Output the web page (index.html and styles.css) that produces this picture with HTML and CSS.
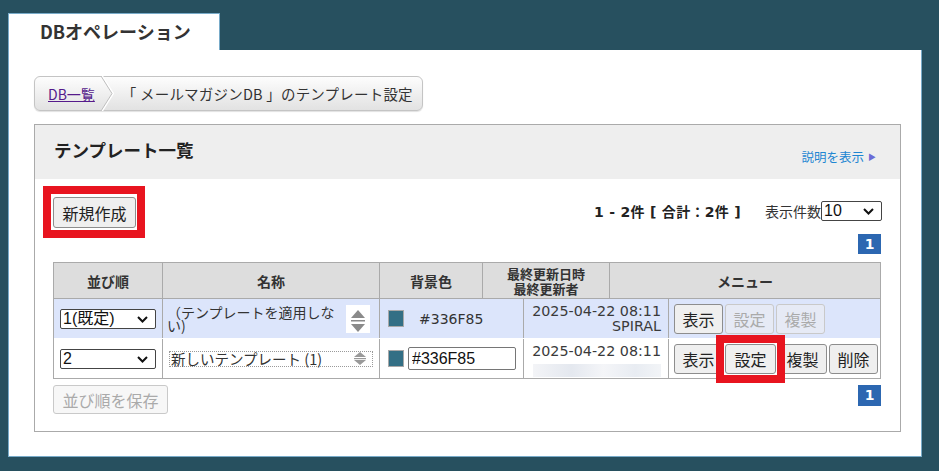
FILE: index.html
```html
<!DOCTYPE html>
<html lang="ja">
<head>
  <meta charset="UTF-8" />
  <title>DBオペレーション</title>
  <link rel="stylesheet" href="styles.css">
</head>
<body>

<div class="tab">DBオペレーション</div>

<div class="panel">
  <div class="crumbs">
    <a href="#" class="crumb-link">DB一覧</a>
    <svg class="crumb-sep" width="14" height="35" viewBox="0 0 14 35">
      <polyline points="1,0 12,17.5 1,35" fill="none" stroke="#fff" stroke-width="2"/>
      <polyline points="0,0 11,17.5 0,35" fill="none" stroke="#bdbdbd" stroke-width="1"/>
    </svg>
    <span class="crumb-text">「 メールマガジンDB 」のテンプレート設定</span>
  </div>

  <div class="list">
    <div class="list-head">
      <h2>テンプレート一覧</h2>
      <a href="#" class="help">説明を表示<span class="help-arrow">&#9654;</span></a>
    </div>

    <div class="list-body">
      <div class="toolbar">
        <span class="marked">
          <button class="btn btn-new">新規作成</button>
          <span class="mark"></span>
        </span>
        <div class="counts">
          <b class="total">1 - 2件 [ 合計：2件 ]</b>
          <span class="per-page">表示件数</span>
          <span class="sel">
            <select class="per-select"><option>10</option></select>
            <svg width="11" height="7" viewBox="0 0 11 7"><polyline points="1,1 5.5,5.5 10,1" fill="none" stroke="#111" stroke-width="2"/></svg>
          </span>
        </div>
      </div>

      <div class="pager"><span class="page">1</span></div>

      <div class="grid">
        <div class="grid-head">
          <div>並び順</div>
          <div>名称</div>
          <div>背景色</div>
          <div class="two-line"><span>最終更新日時</span><span>最終更新者</span></div>
          <div>メニュー</div>
        </div>

        <div class="grid-row default">
          <div class="c-order">
            <span class="sel">
              <select class="order"><option>1(既定)</option></select>
              <svg width="11" height="7" viewBox="0 0 11 7"><polyline points="1,1 5.5,5.5 10,1" fill="none" stroke="#111" stroke-width="2"/></svg>
            </span>
          </div>
          <div class="c-name">
            <div class="name-text">（テンプレートを適用しない)</div>
            <svg class="spin" width="24" height="28" viewBox="0 0 24 28">
              <rect width="24" height="28" fill="#fff"/>
              <polygon points="12,5 19,13 5,13" fill="#8a8a8a"/>
              <rect x="5" y="15" width="14" height="1.5" fill="#8a8a8a"/>
              <polygon points="5,19 19,19 12,27" fill="#8a8a8a"/>
            </svg>
          </div>
          <div class="c-color">
            <span class="swatch"></span>
            <span class="hex">#336F85</span>
          </div>
          <div class="c-date">2025-04-22 08:11<br>SPIRAL</div>
          <div class="c-menu">
            <button class="btn btn-sm">表示</button>
            <button class="btn btn-sm" disabled>設定</button>
            <button class="btn btn-sm" disabled>複製</button>
          </div>
        </div>

        <div class="grid-row">
          <div class="c-order">
            <span class="sel">
              <select class="order"><option>2</option></select>
              <svg width="11" height="7" viewBox="0 0 11 7"><polyline points="1,1 5.5,5.5 10,1" fill="none" stroke="#111" stroke-width="2"/></svg>
            </span>
          </div>
          <div class="c-name">
            <div class="name-box">
              <span>新しいテンプレート (1)</span>
              <svg width="12" height="13" viewBox="0 0 12 13">
                <polygon points="6,0 12,5 0,5" fill="#999"/>
                <rect x="0" y="6" width="12" height="1.2" fill="#999"/>
                <polygon points="0,8 12,8 6,13" fill="#999"/>
              </svg>
            </div>
          </div>
          <div class="c-color">
            <span class="swatch"></span>
            <input class="hex-input" type="text" value="#336F85">
          </div>
          <div class="c-date">2025-04-22 08:11<span class="blur"></span></div>
          <div class="c-menu">
            <button class="btn btn-sm">表示</button>
            <span class="marked">
              <button class="btn btn-sm">設定</button>
              <span class="mark mark-sm"></span>
            </span>
            <button class="btn btn-sm">複製</button>
            <button class="btn btn-sm">削除</button>
          </div>
        </div>
      </div>

      <div class="list-foot">
        <button class="btn btn-save" disabled>並び順を保存</button>
        <span class="page">1</span>
      </div>
    </div>
  </div>
</div>

</body>
</html>
```

FILE: styles.css
```css
body {
  margin: 0;
  padding: 13px 17px 0 8px;
  background: #27505f;
  font-family: "DejaVu Sans", "Noto Sans CJK JP", sans-serif;
  color: #222;
}
.tab {
  width: 212px;
  height: 37px;
  box-sizing: border-box;
  background: #fff;
  border: 1px solid #78abc9;
  border-bottom: none;
  padding-left: 31px;
  font-family: "Noto Sans CJK JP", sans-serif;
  font-weight: bold;
  font-size: 18px;
  line-height: 35px;
  color: #333;
}
.panel {
  height: 407px;
  box-sizing: border-box;
  background: #fff;
  border: 1px solid #78abc9;
  border-top: none;
  padding: 26px 20px 0 25px;
}

/* breadcrumb */
.crumbs {
  display: flex;
  align-items: center;
  width: 389px;
  height: 35px;
  box-sizing: border-box;
  border: 1px solid #c4c4c4;
  border-radius: 6px;
  background: linear-gradient(#fdfdfd, #e2e2e2);
  box-shadow: 0 1px 1px rgba(0,0,0,0.12);
  font-family: "Noto Sans CJK JP", sans-serif;
  font-size: 14px;
}
.crumb-link {
  margin-left: 13px;
  color: #551a8b;
}
.crumb-sep {
  margin-left: 6px;
}
.crumb-text {
  margin-left: 7px;
  font-size: 14.5px;
  letter-spacing: 0.2px;
  color: #333;
}

/* list box */
.list {
  margin-top: 13px;
  height: 308px;
  box-sizing: border-box;
  border: 1px solid #aaa;
}
.list-head {
  height: 54px;
  box-sizing: border-box;
  background: #eee;
  display: flex;
  justify-content: space-between;
  align-items: flex-start;
  padding: 13px 24px 0 19px;
}
.list-head h2 {
  margin: 0;
  font-family: "Noto Sans CJK JP", sans-serif;
  font-size: 17.5px;
  line-height: 24px;
  color: #222;
}
.help {
  margin-top: 11px;
  font-family: "Noto Sans CJK JP", sans-serif;
  font-size: 12.5px;
  line-height: 16px;
  color: #1e86d2;
  text-decoration: none;
}
.help-arrow {
  margin-left: 4px;
  font-size: 8px;
  color: #6b6bd6;
  vertical-align: 2px;
}
.list-body {
  padding: 0 19px 0 18px;
}

.btn {
  font-family: "Noto Sans CJK JP", sans-serif;
  font-size: 16px;
  line-height: 1;
  color: #222;
  background: #efefef;
  border: 1px solid #8d8d8d;
  border-radius: 3px;
  padding: 0;
  cursor: pointer;
}
.btn:disabled {
  color: #aaa;
  border-color: #c9c9c9;
  background: rgba(239,239,239,0.5);
  cursor: default;
}
.marked {
  position: relative;
  display: inline-block;
}
.mark {
  position: absolute;
  left: -10px;
  right: -9px;
  top: -11px;
  bottom: -10px;
  border: 8px solid #e8141f;
  pointer-events: none;
}
.mark-sm {
  left: -9px;
  right: -9px;
  top: -9px;
  bottom: -9px;
  z-index: 2;
}

.toolbar {
  margin-top: 18px;
  display: flex;
  justify-content: space-between;
  align-items: center;
  height: 31px;
}
.btn-new {
  display: block;
  width: 83px;
  height: 31px;
}
.counts {
  display: flex;
  align-items: center;
  margin-top: -4px;
  margin-right: -1px;
}
.total {
  font-size: 14px;
  letter-spacing: 0.3px;
  color: #222;
  margin-right: 24px;
}
.per-page {
  font-family: "Noto Sans CJK JP", sans-serif;
  font-size: 14px;
  color: #333;
}

/* selects with chevron */
.sel {
  position: relative;
  display: inline-block;
}
.sel select {
  display: block;
  appearance: none;
  font-family: "Liberation Sans", "Noto Sans CJK JP", sans-serif;
  font-size: 16px;
  height: 20px;
  padding: 0 0 0 2px;
  color: #111;
  background: #fff;
  border: 1px solid #444;
  border-radius: 2px;
}
.sel svg {
  position: absolute;
  right: 8px;
  top: 7px;
  pointer-events: none;
}
.per-select {
  width: 61px;
}

.pager {
  display: flex;
  justify-content: flex-end;
  margin-top: 6px;
}
.page {
  width: 23px;
  height: 20px;
  background: #2c67b1;
  color: #fff;
  font-weight: bold;
  font-size: 14px;
  line-height: 20px;
  text-align: center;
}

/* table */
.grid {
  margin-top: 8px;
  border: 1px solid #aaa;
}
.grid-head,
.grid-row {
  display: grid;
}
.grid-head {
  grid-template-columns: 109px 217px 103px 127px 1fr;
  height: 36px;
  box-sizing: border-box;
  background: #ddd;
  border-bottom: 1px solid #aaa;
  font-family: "Noto Sans CJK JP", sans-serif;
  font-weight: bold;
  font-size: 14px;
  color: #333;
}
.grid-head > div {
  display: flex;
  align-items: center;
  justify-content: center;
  text-align: center;
  border-right: 1px solid #aaa;
}
.grid-head > div:last-child,
.grid-row > div:last-child {
  border-right: none;
}
.grid-head .two-line {
  flex-direction: column;
  font-size: 13px;
  line-height: 15px;
}
.grid-row {
  grid-template-columns: 109px 217px 144px 145px 1fr;
  height: 39px;
}
.grid-row + .grid-row {
  border-top: 1px solid #fff;
}
.grid-row.default {
  background: #dce5fb;
}
.grid-row > div {
  border-right: 1px solid #aaa;
  display: flex;
  align-items: center;
}
.c-order {
  padding-left: 6px;
}
.order {
  width: 96px;
}
.c-name {
  padding-left: 4px;
  font-family: "Noto Sans CJK JP", sans-serif;
  font-size: 14px;
  color: #333;
}
.name-text {
  width: 179px;
  line-height: 13px;
}
.name-box {
  width: 204px;
  height: 16px;
  box-sizing: border-box;
  margin-left: 2px;
  border: 1px dotted #9a9a9a;
  display: flex;
  align-items: center;
  justify-content: space-between;
  padding: 0 6px 0 1px;
  font-size: 14.5px;
  line-height: 14px;
}
.c-color {
  padding-left: 8px;
}
.swatch {
  width: 14px;
  height: 15px;
  background: #336f85;
  border: 1px solid #a8a8a8;
}
.hex {
  margin-left: 15px;
  font-size: 14px;
  color: #333;
}
.hex-input {
  margin-left: 4px;
  width: 108px;
  height: 23px;
  box-sizing: border-box;
  padding: 0 3px;
  font-family: "Liberation Sans", sans-serif;
  font-size: 16px;
  color: #111;
  border: 1px solid #767676;
  border-radius: 2px;
}
.grid-row > .c-date {
  display: block;
  padding: 5px 7px 0 0;
  text-align: right;
  font-size: 14.3px;
  line-height: 14.5px;
  color: #3a3a3a;
}
.blur {
  display: block;
  margin: 5px 0 0 9px;
  height: 13px;
  background: linear-gradient(90deg, #f3f4f7, #e4e8ef 30%, #f4f5f8 55%, #e8ecf2 80%, #f2f4f7);
}
.c-menu {
  padding-left: 5px;
  gap: 2px;
}
.btn-sm {
  width: 49px;
  height: 30px;
}
.c-menu .marked .btn-sm {
  display: block;
  width: 51px;
}

.list-foot {
  margin-top: 6px;
  display: flex;
  justify-content: space-between;
  align-items: flex-start;
}
.btn-save {
  width: 115px;
  height: 29px;
}
.list-foot .page {
  height: 21px;
}
```
